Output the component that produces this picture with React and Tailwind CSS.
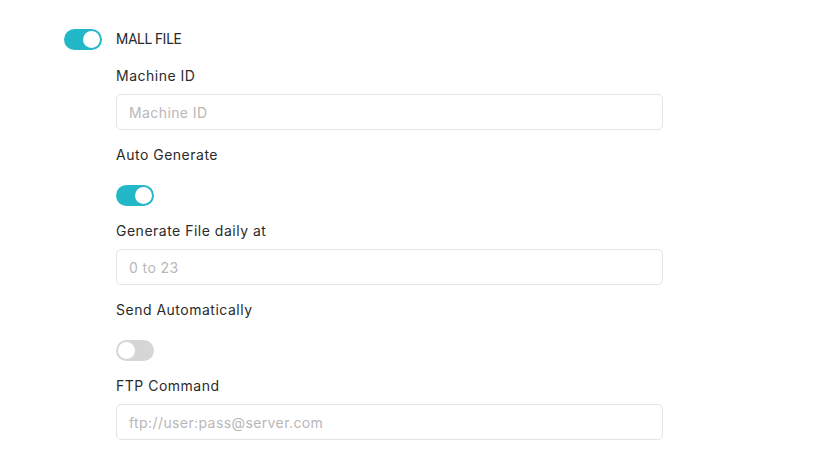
import { useState } from 'react';

function Toggle({ on, onChange }) {
  return (
    <button
      type="button"
      onClick={() => onChange(!on)}
      className={`relative block w-[38px] h-[21px] rounded-full transition-colors ${on ? 'bg-[#22b8c8]' : 'bg-[#d6d6d6]'}`}
    >
      <span
        className={`absolute top-[2px] w-[17px] h-[17px] rounded-full bg-white transition-all ${on ? 'left-[19px]' : 'left-[2px]'}`}
      />
    </button>
  );
}

function Field({ label, placeholder }) {
  return (
    <div>
      <div className="text-[14px] leading-[20px] tracking-[0.5px] text-[#2b2b2b] mb-2">{label}</div>
      <input
        className="block w-[547px] h-[36px] rounded-[5px] border border-[#e4e4e4] bg-white px-3 text-[14px] tracking-[0.4px] text-[#333] placeholder:text-[#b8b8b8] outline-none"
        placeholder={placeholder}
      />
    </div>
  );
}

function ToggleField({ label, on, onChange }) {
  return (
    <div>
      <div className="text-[14px] leading-[20px] tracking-[0.5px] text-[#2b2b2b] mb-5">{label}</div>
      <Toggle on={on} onChange={onChange} />
    </div>
  );
}

export default function App() {
  const [mall, setMall] = useState(true);
  const [auto, setAuto] = useState(true);
  const [send, setSend] = useState(false);

  return (
    <div className="min-h-[465px] bg-white pt-[29px] pl-[64px] font-['Inter',sans-serif]">
      <div className="flex items-center gap-[14px]">
        <Toggle on={mall} onChange={setMall} />
        <span className="font-['Roboto',sans-serif] text-[14px] leading-[20px] tracking-[-0.2px] text-[#2b2b2b] uppercase -mt-[1px]">Mall File</span>
      </div>

      {/* mall file settings */}
      <div className="ml-[52px] mt-4 flex flex-col gap-[15px]">
        <Field label="Machine ID" placeholder="Machine ID" />
        <ToggleField label="Auto Generate" on={auto} onChange={setAuto} />
        <Field label="Generate File daily at" placeholder="0 to 23" />
        <ToggleField label="Send Automatically" on={send} onChange={setSend} />
        <Field label="FTP Command" placeholder="ftp://user:pass@server.com" />
      </div>
    </div>
  );
}
